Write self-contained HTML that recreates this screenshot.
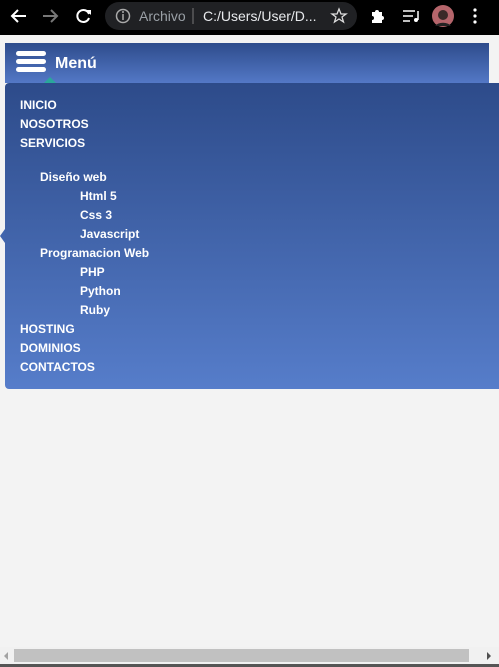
<!DOCTYPE html>
<html><head><meta charset="utf-8"><style>
*{margin:0;padding:0;box-sizing:border-box}
html,body{width:499px;height:667px;overflow:hidden;background:#f3f3f3;font-family:"Liberation Sans",Arial,sans-serif}
#top{position:absolute;left:0;top:0;width:499px;height:35px;background:#000}
#url{position:absolute;left:105px;top:2px;width:252px;height:28px;border-radius:14px;background:#202124}
.t{position:absolute;color:#e8eaed;font-size:14px;white-space:nowrap}
#hdr{position:absolute;left:5px;top:43px;width:484px;height:40px;background:linear-gradient(#2e4c8c,#5378c6)}
.bar{position:absolute;width:30px;height:5px;border-radius:3px;background:#fff}
#panel{position:absolute;left:5px;top:83px;width:500px;height:306px;background:linear-gradient(#2d4b8a,#567dca);border-radius:4px}
.m{position:absolute;color:#fff;font-weight:bold;font-size:12px;white-space:nowrap}
</style></head><body>
<div id="top">
<svg width="499" height="35" style="position:absolute;left:0;top:0">
<path d="M26 16H12M18 10l-6 6 6 6" stroke="#fff" stroke-width="2" fill="none"/>
<path d="M43 16h14M51 10l6 6-6 6" stroke="#777" stroke-width="2" fill="none"/>
<path d="M89 14a6 6 0 1 0 0 4" stroke="#fff" stroke-width="2" fill="none"/><path d="M86 10h5v5z" fill="#fff"/>
<path d="M372 12h3a2 2 0 0 1 4 0h3v4a2 2 0 0 1 0 4v3h-10v-3a2 2 0 0 0 0-4z" fill="#fff"/>
<path d="M403 11h12M403 16h10M403 21h7" stroke="#fff" stroke-width="1.5"/><path d="M418 11v9" stroke="#fff" stroke-width="1.5"/><circle cx="416" cy="20" r="2" fill="#fff"/>
<circle cx="443" cy="16" r="11" fill="#b5656b"/><circle cx="443" cy="15" r="5" fill="#3a2a28"/><path d="M435 26a9 6 0 0 1 16 0" fill="#222"/>
<circle cx="475" cy="10" r="1.6" fill="#fff"/><circle cx="475" cy="16" r="1.6" fill="#fff"/><circle cx="475" cy="22" r="1.6" fill="#fff"/>
</svg>
<div id="url">
<svg width="252" height="28" style="position:absolute;left:0;top:0"><circle cx="18" cy="14" r="6.5" stroke="#aaa" stroke-width="1.5" fill="none"/><path d="M18 12v6" stroke="#aaa" stroke-width="1.5"/><circle cx="18" cy="10" r="1" fill="#aaa"/>
<path d="M88 6v16" stroke="#777"/>
<path d="M234 7l2 5h5l-4 3 1.5 5-4.5-3-4.5 3 1.5-5-4-3h5z" stroke="#ddd" stroke-width="1.3" fill="none"/></svg>
<div class="t" style="left:34px;top:6px;color:#9aa0a6">Archivo</div>
<div class="t" style="left:98px;top:6px">C:/Users/User/D...</div>
</div>
</div>
<div id="hdr">
<div class="bar" style="left:11px;top:8px"></div><div class="bar" style="left:11px;top:16px"></div><div class="bar" style="left:11px;top:24px"></div>
<div class="m" style="left:50px;top:12px;font-size:16px">Menú</div>
</div>
<div style="position:absolute;left:44px;top:77px;width:0;height:0;border-left:6px solid transparent;border-right:6px solid transparent;border-bottom:6px solid #2aa79b"></div>
<div style="position:absolute;left:0;top:229px;width:0;height:0;border-top:7px solid transparent;border-bottom:7px solid transparent;border-right:5px solid #4165ad"></div>
<div id="panel"></div>
<div class="m" style="left:20px;top:98px">INICIO</div>
<div class="m" style="left:20px;top:117px">NOSOTROS</div>
<div class="m" style="left:20px;top:136px">SERVICIOS</div>
<div class="m" style="left:40px;top:170px">Diseño web</div>
<div class="m" style="left:80px;top:189px">Html 5</div>
<div class="m" style="left:80px;top:208px">Css 3</div>
<div class="m" style="left:80px;top:227px">Javascript</div>
<div class="m" style="left:40px;top:246px">Programacion Web</div>
<div class="m" style="left:80px;top:265px">PHP</div>
<div class="m" style="left:80px;top:284px">Python</div>
<div class="m" style="left:80px;top:303px">Ruby</div>
<div class="m" style="left:20px;top:322px">HOSTING</div>
<div class="m" style="left:20px;top:341px">DOMINIOS</div>
<div class="m" style="left:20px;top:360px">CONTACTOS</div>
<div style="position:absolute;left:0;top:647px;width:499px;height:17px;background:#f1f1f1"></div>
<div style="position:absolute;left:14px;top:649px;width:455px;height:13px;background:#c1c1c1"></div>
<div style="position:absolute;left:4px;top:652px;border-top:4px solid transparent;border-bottom:4px solid transparent;border-right:4px solid #a3a3a3"></div>
<div style="position:absolute;left:487px;top:652px;border-top:4px solid transparent;border-bottom:4px solid transparent;border-left:4px solid #505050"></div>
<div style="position:absolute;left:0;top:664px;width:499px;height:3px;background:#555"></div>
</body></html>
